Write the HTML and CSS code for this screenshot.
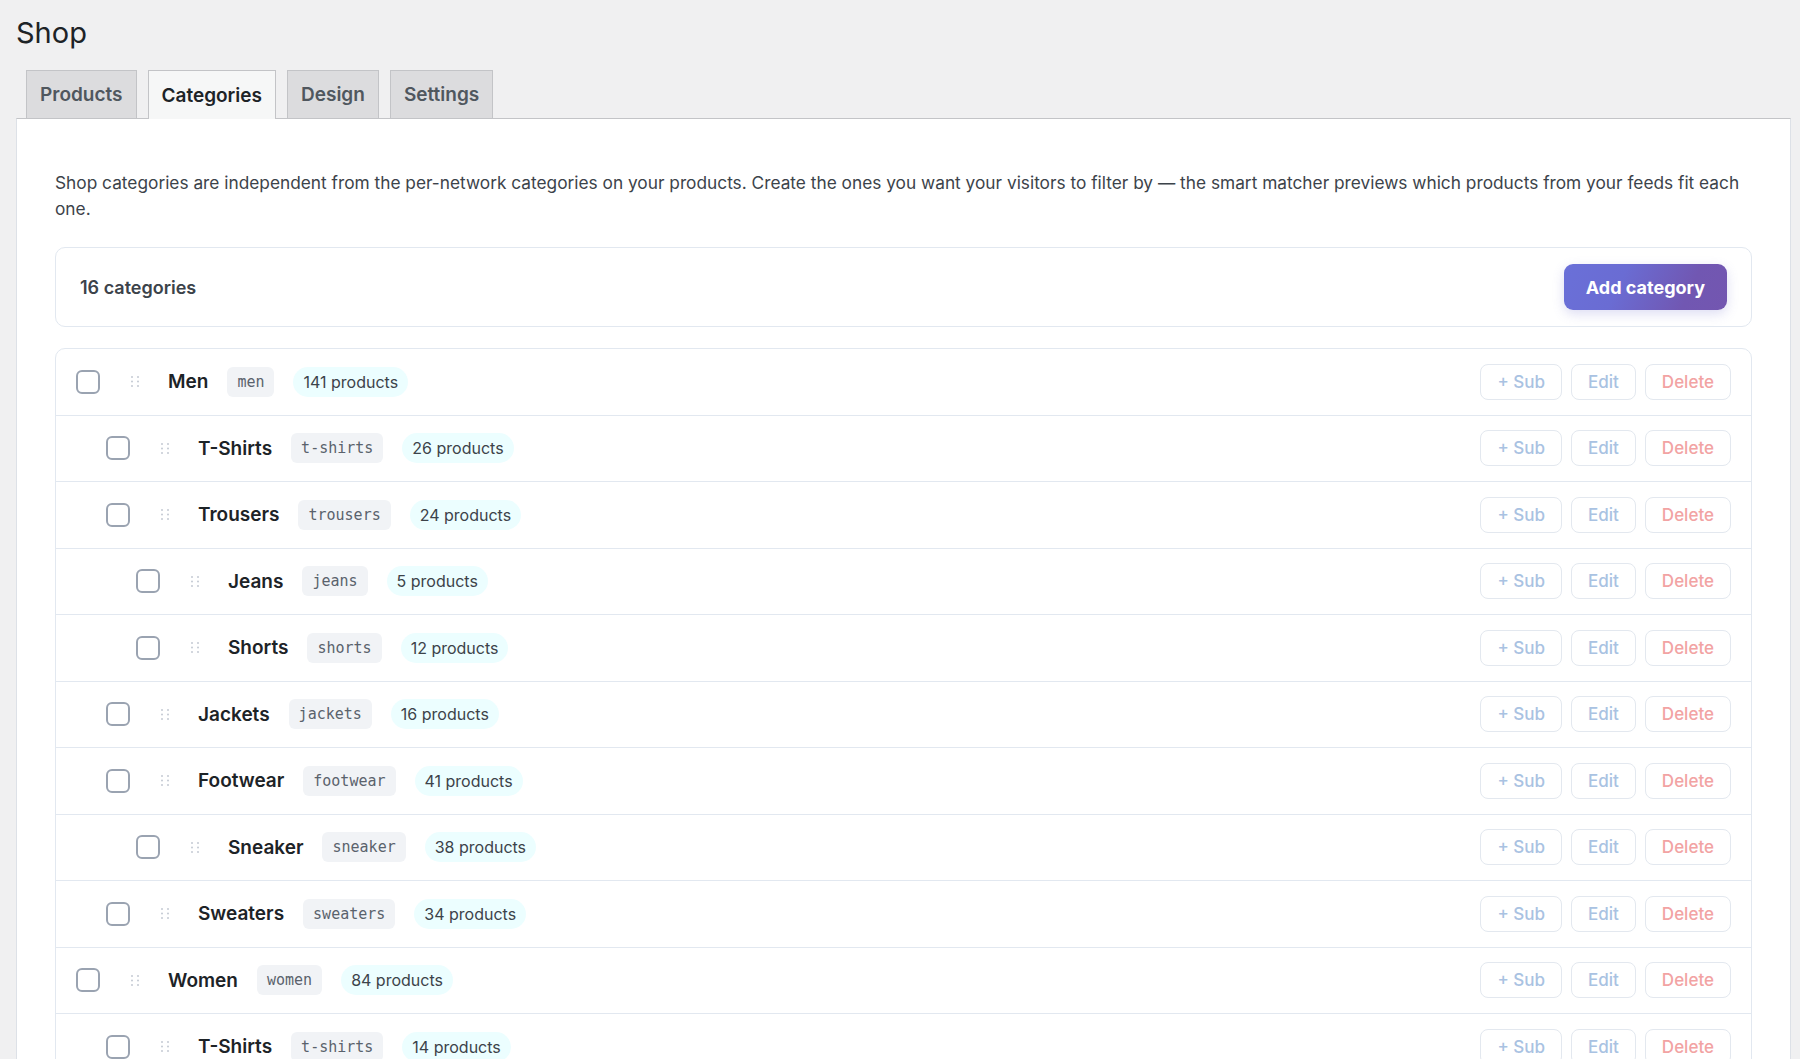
FILE: index.html
```html
<!DOCTYPE html>
<html lang="en">
<head>
    <meta charset="UTF-8">
    <meta name="viewport" content="width=device-width, initial-scale=1.0">
    <title>Shop - Categories</title>
    <link rel="stylesheet" href="styles.css">
</head>
<body>
    <div class="wrap">
        <h1>Shop</h1>

        <nav class="nav-tabs">
            <a class="nav-tab" href="#">Products</a>
            <a class="nav-tab active" href="#">Categories</a>
            <a class="nav-tab" href="#">Design</a>
            <a class="nav-tab" href="#">Settings</a>
        </nav>

        <div class="panel">
            <p class="intro">Shop categories are independent from the per-network categories on your products. Create the ones you want your visitors to filter by — the smart matcher previews which products from your feeds fit each one.</p>

            <div class="toolbar">
                <span class="cat-total">16 categories</span>
                <button class="btn-add">Add category</button>
            </div>

            <div class="cat-list">
                <div class="cat-row level-0">
                    <span class="check"></span>
                    <svg class="handle" width="8" height="11" viewBox="0 0 8 11"><circle cx="1" cy="1" r="1"/><circle cx="7" cy="1" r="1"/><circle cx="1" cy="5.5" r="1"/><circle cx="7" cy="5.5" r="1"/><circle cx="1" cy="10" r="1"/><circle cx="7" cy="10" r="1"/></svg>
                    <span class="cat-name">Men</span>
                    <code class="slug">men</code>
                    <span class="count">141 products</span>
                    <div class="row-actions"><button class="act">+ Sub</button><button class="act">Edit</button><button class="act del">Delete</button></div>
                </div>
                <div class="cat-row level-1">
                    <span class="check"></span>
                    <svg class="handle" width="8" height="11" viewBox="0 0 8 11"><circle cx="1" cy="1" r="1"/><circle cx="7" cy="1" r="1"/><circle cx="1" cy="5.5" r="1"/><circle cx="7" cy="5.5" r="1"/><circle cx="1" cy="10" r="1"/><circle cx="7" cy="10" r="1"/></svg>
                    <span class="cat-name">T-Shirts</span>
                    <code class="slug">t-shirts</code>
                    <span class="count">26 products</span>
                    <div class="row-actions"><button class="act">+ Sub</button><button class="act">Edit</button><button class="act del">Delete</button></div>
                </div>
                <div class="cat-row level-1">
                    <span class="check"></span>
                    <svg class="handle" width="8" height="11" viewBox="0 0 8 11"><circle cx="1" cy="1" r="1"/><circle cx="7" cy="1" r="1"/><circle cx="1" cy="5.5" r="1"/><circle cx="7" cy="5.5" r="1"/><circle cx="1" cy="10" r="1"/><circle cx="7" cy="10" r="1"/></svg>
                    <span class="cat-name">Trousers</span>
                    <code class="slug">trousers</code>
                    <span class="count">24 products</span>
                    <div class="row-actions"><button class="act">+ Sub</button><button class="act">Edit</button><button class="act del">Delete</button></div>
                </div>
                <div class="cat-row level-2">
                    <span class="check"></span>
                    <svg class="handle" width="8" height="11" viewBox="0 0 8 11"><circle cx="1" cy="1" r="1"/><circle cx="7" cy="1" r="1"/><circle cx="1" cy="5.5" r="1"/><circle cx="7" cy="5.5" r="1"/><circle cx="1" cy="10" r="1"/><circle cx="7" cy="10" r="1"/></svg>
                    <span class="cat-name">Jeans</span>
                    <code class="slug">jeans</code>
                    <span class="count">5 products</span>
                    <div class="row-actions"><button class="act">+ Sub</button><button class="act">Edit</button><button class="act del">Delete</button></div>
                </div>
                <div class="cat-row level-2">
                    <span class="check"></span>
                    <svg class="handle" width="8" height="11" viewBox="0 0 8 11"><circle cx="1" cy="1" r="1"/><circle cx="7" cy="1" r="1"/><circle cx="1" cy="5.5" r="1"/><circle cx="7" cy="5.5" r="1"/><circle cx="1" cy="10" r="1"/><circle cx="7" cy="10" r="1"/></svg>
                    <span class="cat-name">Shorts</span>
                    <code class="slug">shorts</code>
                    <span class="count">12 products</span>
                    <div class="row-actions"><button class="act">+ Sub</button><button class="act">Edit</button><button class="act del">Delete</button></div>
                </div>
                <div class="cat-row level-1">
                    <span class="check"></span>
                    <svg class="handle" width="8" height="11" viewBox="0 0 8 11"><circle cx="1" cy="1" r="1"/><circle cx="7" cy="1" r="1"/><circle cx="1" cy="5.5" r="1"/><circle cx="7" cy="5.5" r="1"/><circle cx="1" cy="10" r="1"/><circle cx="7" cy="10" r="1"/></svg>
                    <span class="cat-name">Jackets</span>
                    <code class="slug">jackets</code>
                    <span class="count">16 products</span>
                    <div class="row-actions"><button class="act">+ Sub</button><button class="act">Edit</button><button class="act del">Delete</button></div>
                </div>
                <div class="cat-row level-1">
                    <span class="check"></span>
                    <svg class="handle" width="8" height="11" viewBox="0 0 8 11"><circle cx="1" cy="1" r="1"/><circle cx="7" cy="1" r="1"/><circle cx="1" cy="5.5" r="1"/><circle cx="7" cy="5.5" r="1"/><circle cx="1" cy="10" r="1"/><circle cx="7" cy="10" r="1"/></svg>
                    <span class="cat-name">Footwear</span>
                    <code class="slug">footwear</code>
                    <span class="count">41 products</span>
                    <div class="row-actions"><button class="act">+ Sub</button><button class="act">Edit</button><button class="act del">Delete</button></div>
                </div>
                <div class="cat-row level-2">
                    <span class="check"></span>
                    <svg class="handle" width="8" height="11" viewBox="0 0 8 11"><circle cx="1" cy="1" r="1"/><circle cx="7" cy="1" r="1"/><circle cx="1" cy="5.5" r="1"/><circle cx="7" cy="5.5" r="1"/><circle cx="1" cy="10" r="1"/><circle cx="7" cy="10" r="1"/></svg>
                    <span class="cat-name">Sneaker</span>
                    <code class="slug">sneaker</code>
                    <span class="count">38 products</span>
                    <div class="row-actions"><button class="act">+ Sub</button><button class="act">Edit</button><button class="act del">Delete</button></div>
                </div>
                <div class="cat-row level-1">
                    <span class="check"></span>
                    <svg class="handle" width="8" height="11" viewBox="0 0 8 11"><circle cx="1" cy="1" r="1"/><circle cx="7" cy="1" r="1"/><circle cx="1" cy="5.5" r="1"/><circle cx="7" cy="5.5" r="1"/><circle cx="1" cy="10" r="1"/><circle cx="7" cy="10" r="1"/></svg>
                    <span class="cat-name">Sweaters</span>
                    <code class="slug">sweaters</code>
                    <span class="count">34 products</span>
                    <div class="row-actions"><button class="act">+ Sub</button><button class="act">Edit</button><button class="act del">Delete</button></div>
                </div>
                <div class="cat-row level-0">
                    <span class="check"></span>
                    <svg class="handle" width="8" height="11" viewBox="0 0 8 11"><circle cx="1" cy="1" r="1"/><circle cx="7" cy="1" r="1"/><circle cx="1" cy="5.5" r="1"/><circle cx="7" cy="5.5" r="1"/><circle cx="1" cy="10" r="1"/><circle cx="7" cy="10" r="1"/></svg>
                    <span class="cat-name">Women</span>
                    <code class="slug">women</code>
                    <span class="count">84 products</span>
                    <div class="row-actions"><button class="act">+ Sub</button><button class="act">Edit</button><button class="act del">Delete</button></div>
                </div>
                <div class="cat-row level-1">
                    <span class="check"></span>
                    <svg class="handle" width="8" height="11" viewBox="0 0 8 11"><circle cx="1" cy="1" r="1"/><circle cx="7" cy="1" r="1"/><circle cx="1" cy="5.5" r="1"/><circle cx="7" cy="5.5" r="1"/><circle cx="1" cy="10" r="1"/><circle cx="7" cy="10" r="1"/></svg>
                    <span class="cat-name">T-Shirts</span>
                    <code class="slug">t-shirts</code>
                    <span class="count">14 products</span>
                    <div class="row-actions"><button class="act">+ Sub</button><button class="act">Edit</button><button class="act del">Delete</button></div>
                </div>
            </div>
        </div>
    </div>
</body>
</html>
```

FILE: styles.css
```css
html, body {
    overflow: hidden;
}
body {
    margin: 0;
    background: #f0f0f1;
    font-family: Inter, "Noto Sans", sans-serif;
    color: #1d2327;
}
.wrap {
    padding: 13px 9px 0 16px;
}
h1 {
    margin: 0;
    font-size: 29px;
    font-weight: 400;
    line-height: 40px;
    color: #1d2327;
}

/* tabs */
.nav-tabs {
    display: flex;
    gap: 11px;
    margin-top: 17px;
    padding-left: 10px;
}
.nav-tab {
    display: flex;
    align-items: center;
    box-sizing: border-box;
    height: 48px;
    padding: 0 13px;
    background: #dcdcde;
    border: 1px solid #c3c4c7;
    border-bottom: none;
    color: #50575e;
    font-size: 19px;
    font-weight: 600;
    text-decoration: none;
}
.nav-tab.active {
    position: relative;
    z-index: 1;
    height: 49px;
    margin-bottom: -1px;
    background: #f6f7f7;
    color: #1d2327;
}

/* panel */
.panel {
    background: #fff;
    border: 1px solid #dde1e7;
    border-top-color: #c3c4c7;
    padding: 37px 38px 40px;
}
.intro {
    margin: 14px 0 0;
    font-size: 17.3px;
    line-height: 26px;
    color: #3c434a;
}
.toolbar {
    display: flex;
    align-items: center;
    justify-content: space-between;
    margin-top: 25px;
    padding: 16px 24px;
    border: 1px solid #e2e8f0;
    border-radius: 10px;
}
.cat-total {
    font-size: 18px;
    font-weight: 600;
    color: #3c434a;
}
.btn-add {
    height: 46px;
    padding: 0 22px;
    border: none;
    border-radius: 9px;
    background: linear-gradient(115deg, #6a70d8 0%, #6a6cd3 35%, #7157b2 75%, #7356b0 100%);
    box-shadow: 0 4px 12px rgba(99, 102, 200, 0.22);
    color: #fff;
    font-family: inherit;
    font-size: 18px;
    font-weight: 700;
    cursor: pointer;
}

/* category list */
.cat-list {
    margin-top: 21px;
    border: 1px solid #e2e8f0;
    border-radius: 10px;
}
.cat-row {
    display: flex;
    align-items: center;
    box-sizing: border-box;
    height: 66.5px;
    padding-right: 20px;
    border-top: 1px solid #e2e8f0;
}
.cat-row:first-child {
    border-top: none;
    height: 65.5px;
}
.level-0 { padding-left: 20px; }
.level-1 { padding-left: 50px; }
.level-2 { padding-left: 80px; }
.check {
    box-sizing: border-box;
    width: 24px;
    height: 24px;
    border: 2px solid #9aa3b1;
    border-radius: 6px;
    background: #fff;
    flex-shrink: 0;
}
.handle {
    margin: 0 29px 0 31px;
    fill: #c4cad3;
    flex-shrink: 0;
}
.cat-name {
    font-size: 19px;
    font-weight: 600;
    color: #1d2327;
}
.slug {
    margin-left: 19px;
    padding: 0 10px;
    line-height: 30px;
    border-radius: 6px;
    background: #f1f3f6;
    color: #5a626c;
    font-family: "DejaVu Sans Mono", "Liberation Mono", monospace;
    font-size: 15px;
}
.count {
    margin-left: 19px;
    padding: 0 10px;
    line-height: 30px;
    border-radius: 15px;
    background: #ecfeff;
    color: #3c434a;
    font-size: 16px;
}
.row-actions {
    display: flex;
    gap: 9px;
    margin-left: auto;
}
.act {
    height: 36px;
    padding: 0 16px;
    border: 1px solid #e3e8ef;
    border-radius: 8px;
    background: #fff;
    color: #a9c2e2;
    font-family: inherit;
    font-size: 17px;
    font-weight: 500;
    cursor: pointer;
}
.act.del {
    color: #f2a3a3;
}
```
